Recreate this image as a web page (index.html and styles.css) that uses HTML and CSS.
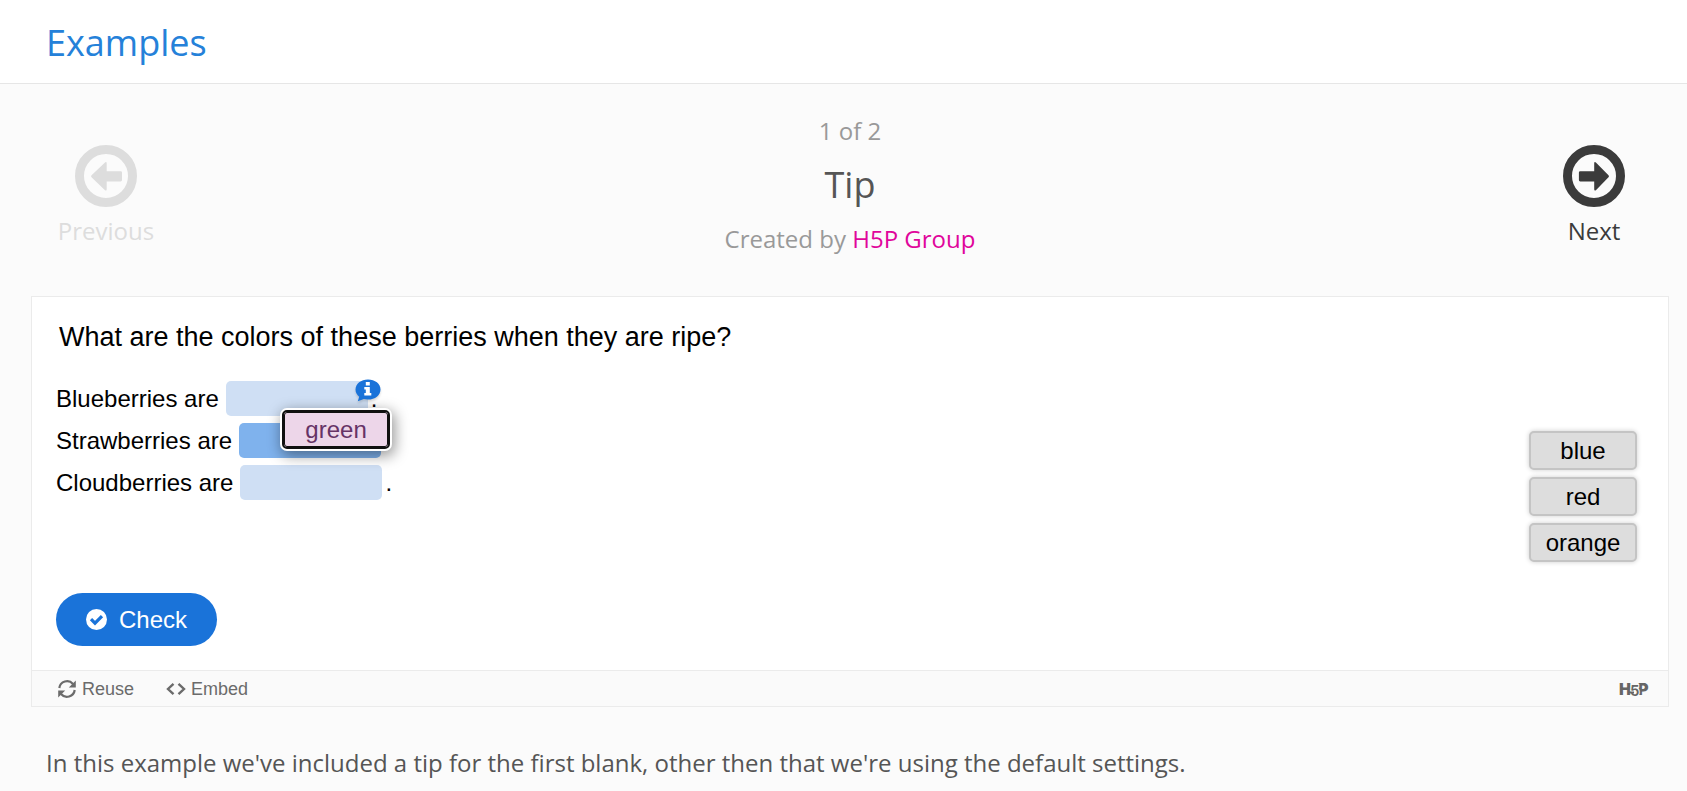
FILE: index.html
```html
<!DOCTYPE html>
<html lang="en">

<head>
  <meta charset="UTF-8">
  <meta name="viewport" content="width=device-width, initial-scale=1.0">
  <title>Examples - Tip</title>
  <link rel="stylesheet" href="styles.css">
</head>

<body>
  <header class="header">
    <a class="header-title" href="#">Examples</a>
  </header>

  <main class="main">
    <nav class="pager">
      <button class="pager-btn" type="button" disabled>
        <svg class="pager-icon" viewBox="0 0 62 62">
          <circle cx="31" cy="31" r="26.5" fill="none" stroke="currentColor" stroke-width="9" />
          <path d="M16.5 30.2 30 17.4q1.7-1 1.7 1v7.8h14q1.3 0 1.3 1.3v7.6q0 1.3-1.3 1.3h-14v7.8q0 2-1.7 1L16.5 32.2q-1-1 0-2z" fill="currentColor" />
        </svg>
        Previous
      </button>
      <div class="pager-info">
        <p class="count">1 of 2</p>
        <h1 class="title">Tip</h1>
        <p class="author">Created by <a href="#">H5P Group</a></p>
      </div>
      <button class="pager-btn" type="button">
        <svg class="pager-icon" viewBox="0 0 62 62">
          <circle cx="31" cy="31" r="26.5" fill="none" stroke="currentColor" stroke-width="9" />
          <path d="M45.5 30.2 32.9 17.4q-1.7-1-1.7 1v7.8h-14q-1.3 0-1.3 1.3v7.6q0 1.3 1.3 1.3h14v7.8q0 2 1.7 1L45.5 32.2q1-1 0-2z" fill="currentColor" />
        </svg>
        Next
      </button>
    </nav>

    <section class="card">
      <div class="content">
        <h2 class="question">What are the colors of these berries when they are ripe?</h2>
        <div class="task">
          <div class="words">
            <div class="row">
              Blueberries are
              <span class="blank">
                <button class="tip" type="button" aria-label="Show tip">
                  <svg width="26" height="24" viewBox="0 0 26 24">
                    <path d="M13 .5C6 .5.5 4.8.5 10.5c0 3 1.500 5.500 3.700 7.200L2.800 22.200l6-2.100c1.300.3 2.700.5 4.200.5 7 0 12.500-4.400 12.500-10.100S20 .5 13 .5z" fill="#1a73d9" />
                    <path d="M10.800 3h4v3.400h-4zM9.300 8h5.500v6h1.500v2.500h-7V14h1.500v-3.500H9.300z" fill="#fff" />
                  </svg>
                </button>
              </span>
              .
            </div>
            <div class="row">
              Strawberries are
              <span class="blank active">
                <button class="drag dragging" type="button">green</button>
              </span>
            </div>
            <div class="row">
              Cloudberries are
              <span class="blank"></span>
              .
            </div>
          </div>
          <div class="drags">
            <button class="drag" type="button">blue</button>
            <button class="drag" type="button">red</button>
            <button class="drag" type="button">orange</button>
          </div>
        </div>
        <button class="check" type="button">
          <svg width="21" height="21" viewBox="0 0 21 21">
            <circle cx="10.500" cy="10.500" r="10.500" fill="#fff" />
            <path d="M5 10.200l4 4 7-7" fill="none" stroke="#1a73d9" stroke-width="3.200" />
          </svg>
          Check
        </button>
      </div>
      <div class="actions">
        <button class="action" type="button">
          <svg width="20" height="20" viewBox="0 0 20 20">
            <path d="M2.300 9A7.800 7.800 0 0 1 16 5M17.700 11A7.800 7.800 0 0 1 4 15" fill="none" stroke="currentColor" stroke-width="2.200" />
            <path d="M18.800 1.500v7h-7zM1.200 18.500v-7h7z" fill="currentColor" />
          </svg>
          Reuse
        </button>
        <button class="action" type="button">
          <svg width="20" height="20" viewBox="0 0 20 20">
            <path d="M7.500 4.800 2 10l5.500 5.200M12.500 4.800 18 10l-5.500 5.200" fill="none" stroke="currentColor" stroke-width="2.400" />
          </svg>
          Embed
        </button>
        <a class="logo" href="#" aria-label="H5P">
          <svg width="32" height="26" viewBox="0 0 32 26">
            <text class="logo-text" x="0" y="19">H</text>
            <text class="logo-text" x="19" y="19">P</text>
            <text class="logo-five" x="11" y="20">5</text>
            <path d="M9 16.500h6" stroke="currentColor" stroke-width="2" />
          </svg>
        </a>
      </div>
    </section>

    <p class="desc">In this example we've included a tip for the first blank, other then that we're using the default settings.</p>
  </main>
</body>

</html>
```
FILE: styles.css
```css
* {
  box-sizing: border-box;
}

body {
  margin: 0;
  background: #fbfbfb;
  color: #555;
  font: 24px/32px "Open Sans", sans-serif;
}

p,
h1,
h2 {
  margin: 0;
  font-weight: 400;
}

button {
  padding: 0;
  border: 0;
  background: none;
  color: inherit;
  font: inherit;
  cursor: pointer;
}

a {
  text-decoration: none;
}

svg {
  display: block;
}

.header {
  padding: 19px 46px 16px;
  border-bottom: 1px solid #e6e6e6;
  background: #fff;
}

.header-title {
  display: block;
  color: #2581d9;
  font-size: 36px;
  line-height: 48px;
}

.main {
  padding: 31px 18px 0 31px;
}

.pager {
  display: flex;
  justify-content: space-between;
  margin-bottom: 41px;
}

.pager-btn {
  display: flex;
  flex-direction: column;
  align-items: center;
  gap: 8px;
  width: 150px;
  padding-top: 30px;
  color: #3b3b3b;
}

.pager-btn:disabled {
  color: #ddd;
  cursor: default;
}

.pager-icon {
  width: 62px;
  height: 62px;
}

.pager-info {
  text-align: center;
  color: #999;
}

.title {
  margin: 14px 0;
  color: #555;
  font-size: 36px;
  line-height: 48px;
}

.author a {
  color: #e0069b;
}

.card {
  border: 1px solid #ebebeb;
  background: #fff;
  color: #000;
  font-family: "Liberation Sans", Arial, sans-serif;
}

.content {
  padding: 22px 31px 24px 24px;
}

.question {
  padding-left: 3px;
  font-size: 27px;
  line-height: 36px;
}

.task {
  display: flex;
  align-items: flex-start;
  justify-content: space-between;
  margin: 23px 0 31px;
}

.row {
  display: flex;
  align-items: center;
  height: 42px;
}

.blank {
  position: relative;
  width: 142px;
  height: 35px;
  margin: 0 3px 2px 7px;
  border-radius: 5px;
  background: #cfdff4;
}

.blank.active {
  background: #7fb2ed;
}

.tip {
  position: absolute;
  top: -2px;
  right: -13px;
  filter: drop-shadow(0 2px 1px rgba(0, 0, 0, 0.15));
}

.drags {
  display: flex;
  flex-direction: column;
  gap: 7px;
  padding-top: 53px;
}

.drag {
  width: 108px;
  height: 39px;
  border: 2px solid #c4c4c4;
  border-radius: 5px;
  background: #ddd;
  box-shadow: 0 0 5px rgba(0, 0, 0, 0.2);
  line-height: 31px;
}

/* picked up and held over the second blank */
.drag.dragging {
  position: absolute;
  top: -13px;
  left: 43px;
  z-index: 1;
  border-color: #101010;
  background: #edd6e9;
  box-shadow: 0 0 0 2px #fff, 2px 4px 14px 3px rgba(0, 0, 0, 0.4);
  color: #663366;
  outline: 1px solid #101010;
  outline-offset: -3px;
}

.check {
  display: flex;
  align-items: center;
  gap: 12px;
  height: 53px;
  padding: 0 30px;
  border-radius: 27px;
  background: #1a73d9;
  color: #fff;
}

.actions {
  display: flex;
  align-items: center;
  gap: 32px;
  height: 36px;
  padding: 0 17px 0 25px;
  border-top: 1px solid #ebebeb;
  background: #fafafa;
  color: #6b6b6b;
  font-size: 18px;
  line-height: 24px;
}

.action {
  display: flex;
  align-items: center;
  gap: 5px;
}

.logo {
  margin-left: auto;
  color: #666;
}

.logo-text {
  fill: currentColor;
  font: 900 16px Inter, sans-serif;
}

.logo-five {
  fill: currentColor;
  stroke: #fafafa;
  stroke-width: 2px;
  paint-order: stroke;
  font: 600 15px Inter, sans-serif;
}

.desc {
  padding: 40px 15px 0;
}
```
